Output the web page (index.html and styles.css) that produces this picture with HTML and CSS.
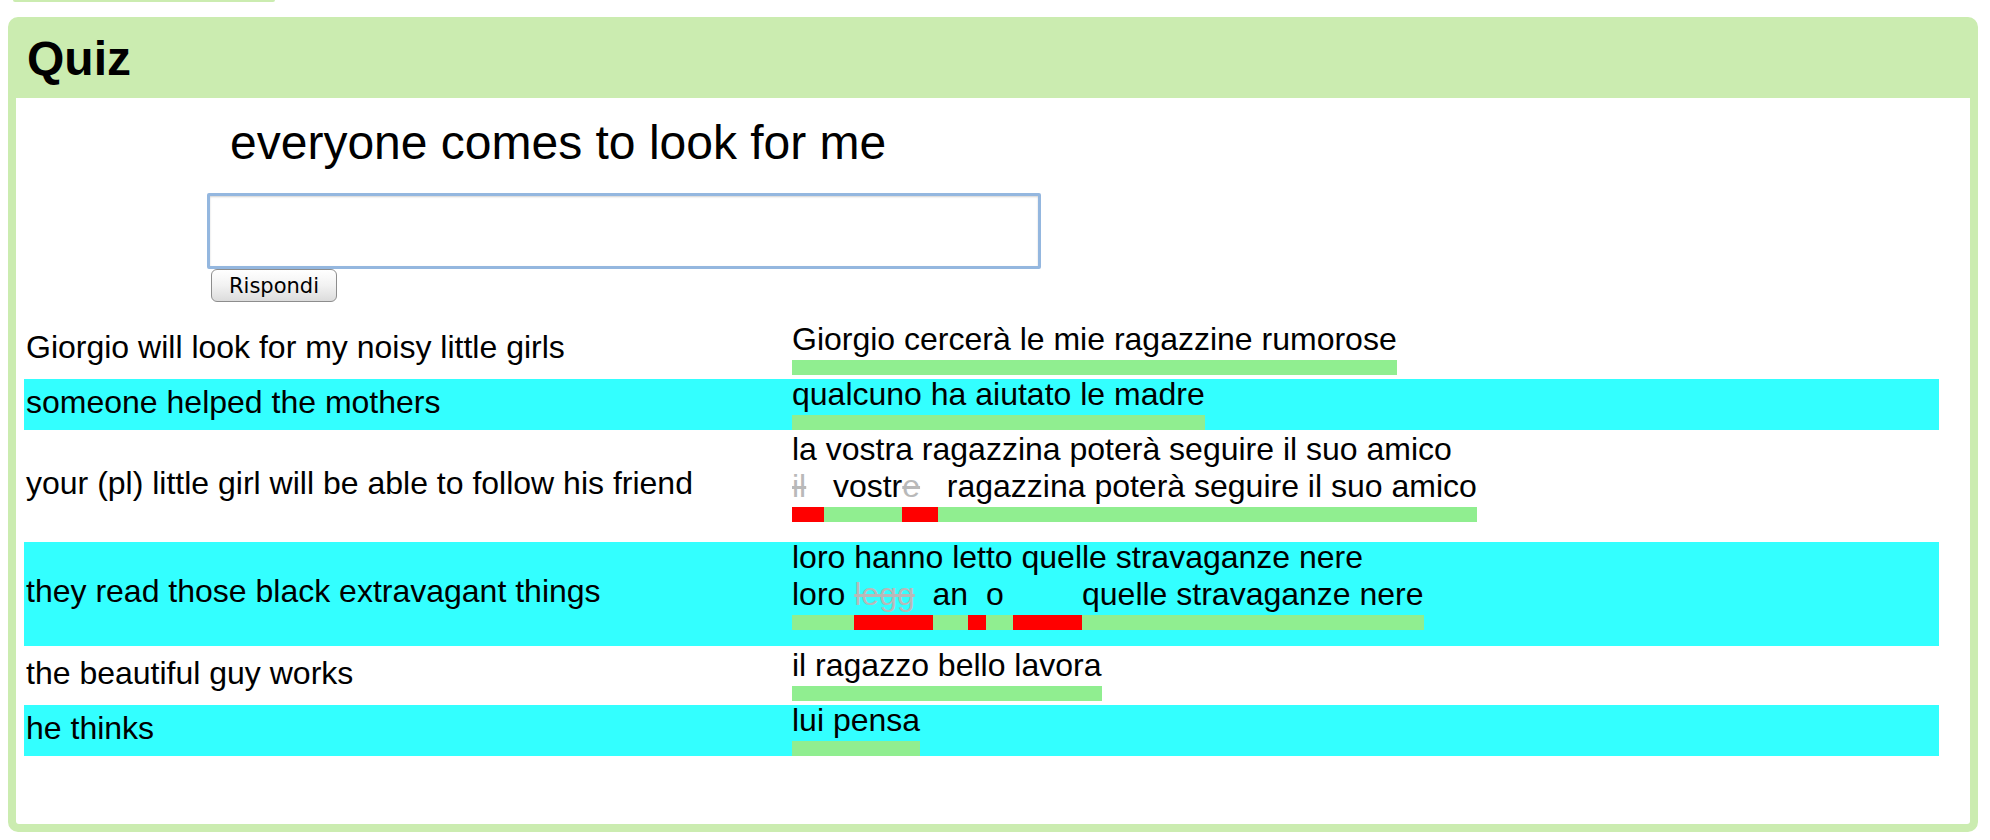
FILE: index.html
```html
<!DOCTYPE html>
<html lang="it">
<head>
<meta charset="utf-8">
<title>Quiz</title>
<link rel="stylesheet" href="styles.css">
</head>
<body>
<div class="tabstrip"></div>
<section class="panel">
  <header class="panel-head"><h2 class="title">Quiz</h2></header>
  <div class="panel-body">
    <p class="question">everyone comes to look for me</p>
    <form class="answer-form">
      <input class="answer-input" type="text">
      <button class="answer-btn" type="button">Rispondi</button>
    </form>
    <table class="results">
      <colgroup><col class="col-prompt"><col class="col-result"></colgroup>
      <tr>
        <td class="prompt">Giorgio will look for my noisy little girls</td>
        <td class="result"><div class="answer"><div class="attempt"><span class="seg ok"><span class="txt">Giorgio cercerà le mie ragazzine rumorose</span><span class="bar"></span></span></div></div></td>
      </tr>
      <tr class="hl">
        <td class="prompt">someone helped the mothers</td>
        <td class="result"><div class="answer"><div class="attempt"><span class="seg ok"><span class="txt">qualcuno ha aiutato le madre</span><span class="bar"></span></span></div></div></td>
      </tr>
      <tr>
        <td class="prompt">your (pl) little girl will be able to follow his friend</td>
        <td class="result"><div class="answer two"><div class="correct">la vostra ragazzina poterà seguire il suo amico</div><div class="attempt"><span class="seg bad"><span class="txt"><span class="del">il</span><span class="ins">a</span></span><span class="bar"></span></span><span class="seg ok"><span class="txt"> vostr</span><span class="bar"></span></span><span class="seg bad"><span class="txt"><span class="del">e</span><span class="ins">a</span></span><span class="bar"></span></span><span class="seg ok"><span class="txt"> ragazzina poterà seguire il suo amico</span><span class="bar"></span></span></div></div></td>
      </tr>
      <tr class="hl">
        <td class="prompt">they read those black extravagant things</td>
        <td class="result"><div class="answer two"><div class="correct">loro hanno letto quelle stravaganze nere</div><div class="attempt"><span class="seg ok"><span class="txt">loro </span><span class="bar"></span></span><span class="seg bad"><span class="txt"><span class="del">legg</span><span class="ins">h</span></span><span class="bar"></span></span><span class="seg ok"><span class="txt">an</span><span class="bar"></span></span><span class="seg bad"><span class="txt"><span class="ins">n</span></span><span class="bar"></span></span><span class="seg ok"><span class="txt">o </span><span class="bar"></span></span><span class="seg bad"><span class="txt"><span class="ins">letto </span></span><span class="bar"></span></span><span class="seg ok"><span class="txt">quelle stravaganze nere</span><span class="bar"></span></span></div></div></td>
      </tr>
      <tr>
        <td class="prompt">the beautiful guy works</td>
        <td class="result"><div class="answer"><div class="attempt"><span class="seg ok"><span class="txt">il ragazzo bello lavora</span><span class="bar"></span></span></div></div></td>
      </tr>
      <tr class="hl">
        <td class="prompt">he thinks</td>
        <td class="result"><div class="answer"><div class="attempt"><span class="seg ok"><span class="txt">lui pensa</span><span class="bar"></span></span></div></div></td>
      </tr>
    </table>
  </div>
</section>
</body>
</html>
```

FILE: styles.css
```css
html, body {
  margin: 0;
  padding: 0;
  background: #ffffff;
}

body {
  font-family: "Liberation Sans", Arial, Helvetica, sans-serif;
  color: #000000;
}

.tabstrip {
  margin-left: 13px;
  width: 262px;
  height: 2px;
  background: #cbecb0;
  border-radius: 0 0 3px 3px;
}

.panel {
  margin: 15px 0 0 8px;
  width: 1970px;
  box-sizing: border-box;
  border: 8px solid #cbecb0;
  border-radius: 10px;
  background: #cbecb0;
}

.panel-head {
  padding: 6px 0 12px 11px;
}

.title {
  margin: 0;
  font-size: 48px;
  line-height: 55px;
  font-weight: bold;
}

.panel-body {
  background: #ffffff;
  padding: 17px 0 64px 0;
  border-radius: 0 0 3px 3px;
}

.question {
  margin: 0 0 0 214px;
  font-size: 48px;
  line-height: 55px;
}

.answer-form {
  margin: 23px 0 0 0;
  display: flex;
  flex-direction: column;
  align-items: flex-start;
}

.answer-input {
  margin: 0 0 0 191px;
  width: 834px;
  height: 76px;
  box-sizing: border-box;
  border: 3px solid #94b7df;
  border-radius: 2px;
  box-shadow: inset 0 1px 2px rgba(0, 0, 0, 0.18);
  background: #ffffff;
  outline: none;
}

.answer-btn {
  margin: 0 0 0 195px;
  width: 126px;
  height: 33px;
  box-sizing: border-box;
  padding: 0;
  border: 1px solid #8d8d8d;
  border-radius: 6px;
  background: linear-gradient(#ffffff, #f2f2f2 50%, #dcdcdc);
  font-family: "DejaVu Sans", "Liberation Sans", sans-serif;
  font-size: 21px;
  line-height: 30px;
  color: #000000;
}

.results {
  margin: 18px 0 0 8px;
  width: 1915px;
  table-layout: fixed;
  border-collapse: separate;
  border-spacing: 0 4px;
  font-size: 32px;
}

.col-prompt {
  width: 766px;
}

.results tr.hl {
  background: #33ffff;
}

.prompt {
  padding: 0 1px 5px 2px;
  vertical-align: middle;
  line-height: 37px;
  white-space: nowrap;
}

.result {
  padding: 0 1px 0 2px;
  vertical-align: top;
}

.answer {
  margin-top: -3px;
}

.answer.two {
  padding-bottom: 16px;
}

.correct {
  line-height: 37px;
  white-space: nowrap;
}

.attempt {
  display: flex;
  align-items: flex-start;
}

.seg {
  display: flex;
  flex-direction: column;
  white-space: pre;
}

.txt {
  line-height: 37px;
}

.bar {
  display: block;
  height: 15px;
  margin-top: 2px;
}

.seg.ok .bar {
  background: #90ee90;
}

.seg.bad .bar {
  background: #ff0000;
}

.del {
  color: #b9b9b9;
  text-decoration: line-through;
  text-decoration-color: #b9b9b9;
}

.ins {
  color: transparent;
}
```
